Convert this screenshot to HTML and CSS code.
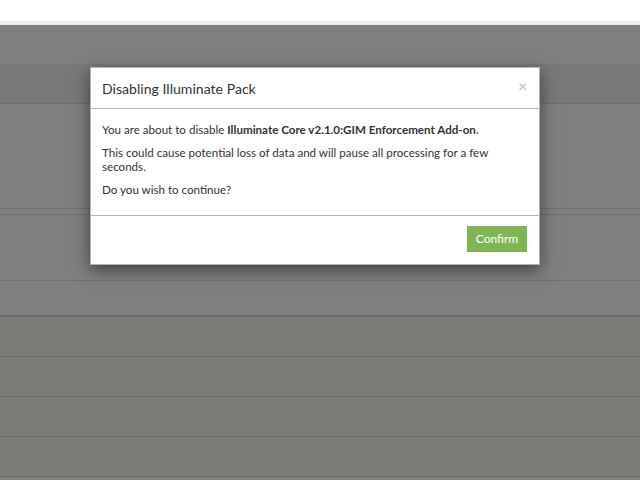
FILE: index.html
```html
<!DOCTYPE html>
<html>
<head>
<meta charset="utf-8">
<link rel="stylesheet" href="styles.css">
</head>
<body>
<div class="topbar"></div>
<div class="app">
  <div class="nav"></div>
  <div class="toolbar"></div>
  <div class="panel"></div>
  <div class="row row-a"></div>
  <div class="row row-b"></div>
  <div class="row row-c"></div>
  <div class="grid">
    <div class="grow"></div>
    <div class="grow"></div>
    <div class="grow"></div>
    <div class="grow"></div>
  </div>
  <div class="overlay">
    <div class="modal">
      <div class="modal-header">
        <h4 class="modal-title">Disabling Illuminate Pack</h4>
        <span class="close">×</span>
      </div>
      <div class="modal-body">
        <p>You are about to disable <b>Illuminate Core v2.1.0:GIM Enforcement Add-on</b>.</p>
        <p>This could cause potential loss of data and will pause all processing for a few seconds.</p>
        <p>Do you wish to continue?</p>
      </div>
      <div class="modal-footer">
        <button class="btn-confirm">Confirm</button>
      </div>
    </div>
  </div>
</div>
</body>
</html>
```
FILE: styles.css
```css
* { box-sizing: border-box; }
html, body { margin: 0; padding: 0; }
body {
  width: 640px;
  height: 480px;
  overflow: hidden;
  background: #fff;
  font-family: "Lato", "Open Sans", sans-serif;
  color: #333;
}
.topbar {
  height: 25px;
  background: #fff;
  border-bottom: 4px solid #ececec;
}
.app {
  position: relative;
  height: 455px;
  background: #fff;
}
.nav { height: 39px; background: #fff; }
.toolbar {
  height: 40px;
  background: #eef0f4;
  border-bottom: 1px solid #dcdee3;
}
.panel {
  height: 105px;
  background: #fff;
  border-bottom: 1px solid #dcdee2;
}
.row { background: #fff; border-bottom: 1px solid #dcdee2; }
.row-a { height: 6px; }
.row-b { height: 66px; }
.row-c { height: 36px; border-bottom: 2px solid #cfd0d6; }
.grid { background: #f6f7f0; }
.grow { height: 40px; border-bottom: 1px solid #d2d3d9; }
.overlay {
  position: absolute;
  inset: 0;
  background: rgba(0, 0, 0, 0.5);
  padding: 42px 0 0 90px;
}
.modal {
  width: 450px;
  background: #fff;
  border: 1px solid #aeb5c2;
  box-shadow: 0 5px 15px rgba(0, 0, 0, 0.5);
}
.modal-header {
  display: flex;
  align-items: center;
  justify-content: space-between;
  height: 41px;
  padding: 0 12px 0 11px;
  border-bottom: 1px solid #aeb5c2;
}
.modal-title {
  margin: 0;
  font-size: 14.1px;
  font-weight: normal;
  color: #333;
}
.close {
  color: #c8c8c8;
  font-size: 15px;
  font-weight: bold;
  margin-top: -4px;
}
.modal-body {
  padding: 14px 11px 11px;
  font-size: 11.6px;
  line-height: 14px;
  border-bottom: 1px solid #aeb5c2;
  height: 107px;
}
.modal-body p { margin: 0 0 9px; }
.modal-footer {
  display: flex;
  justify-content: flex-end;
  padding: 10px 12px 0;
  height: 48px;
}
.btn-confirm {
  width: 60px;
  height: 26px;
  border: 0;
  background: #80b556;
  color: #fff;
  font-family: inherit;
  font-size: 12px;
  padding: 0 0 1px;
}
```
